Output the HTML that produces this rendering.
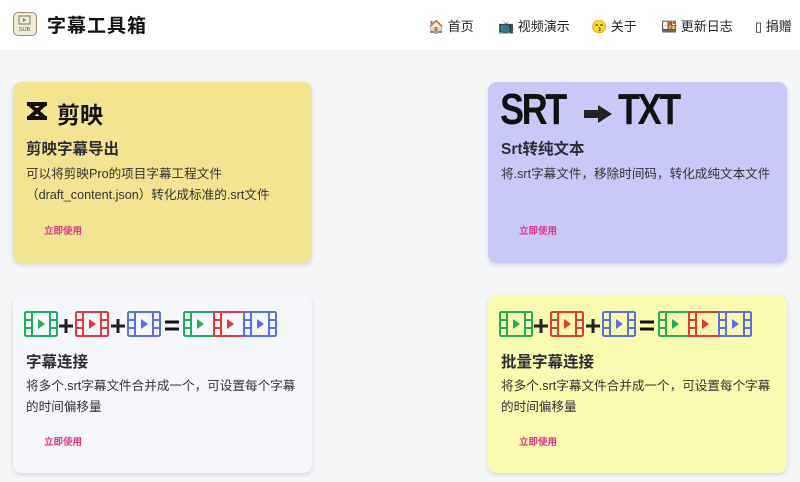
<!DOCTYPE html>
<html><head><meta charset="utf-8"><style>
*{margin:0;padding:0;box-sizing:border-box}
body{width:800px;height:482px;overflow:hidden;background:#f4f5f7;font-family:"Liberation Sans","Noto Sans CJK SC",sans-serif;position:relative}
.hdr{position:absolute;left:0;top:0;width:800px;height:50px;background:#fff}
.logo{position:absolute;left:13px;top:12px;width:24px;height:24px;border:1.5px solid #9a9070;border-radius:5px;background:#f1ecd6}
.title{position:absolute;left:47px;top:11px;font-size:19px;font-weight:bold;color:#111;letter-spacing:1px}
.nav{position:absolute;top:16px;font-size:13px;color:#222}
.card{position:absolute;width:299px;border-radius:9px;box-shadow:0 2px 5px rgba(0,0,0,.13)}
.h{position:absolute;left:13px;font-size:15.5px;font-weight:bold;color:#2d2d35}
.p{position:absolute;left:13px;font-size:12.6px;color:#333;line-height:21px;white-space:nowrap}
.b{position:absolute;left:31px;font-size:9.5px;font-weight:bold;color:#e0338a}
</style></head><body>
<div class="hdr">
<div class="logo"><svg width="21" height="21" viewBox="0 0 21 21" style="position:absolute;left:0;top:0"><rect x="5" y="3" width="11" height="8" fill="none" stroke="#777" stroke-width="1"/><path d="M9 5 L12 7 L9 9Z" fill="#777"/><text x="10.5" y="18" font-size="5.5" text-anchor="middle" fill="#555" font-family="Liberation Sans">SUB</text></svg></div>
<div class="title">字幕工具箱</div>
<div class="nav" style="left:428px">🏠 首页</div>
<div class="nav" style="left:498px">📺 视频演示</div>
<div class="nav" style="left:591px">😙 关于</div>
<div class="nav" style="left:661px">🍱 更新日志</div>
<div class="nav" style="left:755px">▯ 捐赠</div>
</div>

<div class="card" style="left:13px;top:82px;height:181px;background:#f2e491">
<svg style="position:absolute;left:12px;top:19px" width="24" height="20" viewBox="0 0 24 20"><path d="M2 3 L22 3 M2 17 L22 17 M4 3 L20 17 M20 3 L4 17" stroke="#111" stroke-width="4" fill="none"/></svg>
<div style="position:absolute;left:44px;top:14px;font-size:23px;font-weight:bold;color:#111">剪映</div>
<div class="h" style="top:55px">剪映字幕导出</div>
<div class="p" style="top:82px">可以将剪映Pro的项目字幕工程文件<br>（draft_content.json）转化成标准的.srt文件</div>
<div class="b" style="top:141px">立即使用</div>
</div>

<div class="card" style="left:488px;top:82px;height:181px;background:#c8c8f9">
<div style="position:absolute;left:12px;top:3px;font-size:44px;font-weight:bold;color:#111;letter-spacing:-3px;transform:scaleX(.82);transform-origin:left">SRT</div>
<svg style="position:absolute;left:96px;top:23px" width="28" height="18" viewBox="0 0 28 18"><rect x="0" y="5" width="16" height="8" fill="#222"/><path d="M14 0 L28 9 L14 18Z" fill="#222"/></svg>
<div style="position:absolute;left:130px;top:3px;font-size:44px;font-weight:bold;color:#111;letter-spacing:-3px;transform:scaleX(.82);transform-origin:left">TXT</div>
<div class="h" style="top:55px">Srt转纯文本</div>
<div class="p" style="top:82px">将.srt字幕文件，移除时间码，转化成纯文本文件</div>
<div class="b" style="top:141px">立即使用</div>
</div>

<div class="card" style="left:13px;top:295px;height:178px;background:#f5f7fc">
<svg style="position:absolute;left:11px;top:16px" width="265" height="27" viewBox="0 0 265 27">
<g transform="translate(1,1)" stroke="#1fae5a" fill="none" stroke-width="2"><rect width="32" height="24" rx="1.5"/><path d="M7 0V24M25 0V24M0 8H7M0 16H7M25 8H32M25 16H32"/><path d="M13 7L20 12L13 17Z" fill="#1fae5a" stroke="none"/></g>
<path d="M42 8V22M35 15H49" stroke="#222" stroke-width="3"/>
<g transform="translate(52,1)" stroke="#e23a3a" fill="none" stroke-width="2"><rect width="32" height="24" rx="1.5"/><path d="M7 0V24M25 0V24M0 8H7M0 16H7M25 8H32M25 16H32"/><path d="M13 7L20 12L13 17Z" fill="#e23a3a" stroke="none"/></g>
<path d="M94 8V22M87 15H101" stroke="#222" stroke-width="3"/>
<g transform="translate(104,1)" stroke="#5a6fe0" fill="none" stroke-width="2"><rect width="32" height="24" rx="1.5"/><path d="M7 0V24M25 0V24M0 8H7M0 16H7M25 8H32M25 16H32"/><path d="M13 7L20 12L13 17Z" fill="#5a6fe0" stroke="none"/></g>
<path d="M141 11H155M141 18H155" stroke="#111" stroke-width="3"/>
<g transform="translate(160,1)" stroke="#1fae5a" fill="none" stroke-width="2"><rect width="30" height="24" rx="1.5"/><path d="M7 0V24M0 8H7M0 16H7"/><path d="M13 7L20 12L13 17Z" fill="#1fae5a" stroke="none"/></g>
<g transform="translate(190,1)" stroke="#e23a3a" fill="none" stroke-width="2"><rect width="30" height="24"/><path d="M7 0V24M0 8H7M0 16H7"/><path d="M13 7L20 12L13 17Z" fill="#e23a3a" stroke="none"/></g>
<g transform="translate(220,1)" stroke="#5a6fe0" fill="none" stroke-width="2"><rect width="32" height="24" rx="1.5"/><path d="M7 0V24M25 0V24M0 8H7M0 16H7M25 8H32M25 16H32"/><path d="M13 7L20 12L13 17Z" fill="#5a6fe0" stroke="none"/></g>
</svg>
<div class="h" style="top:55px">字幕连接</div>
<div class="p" style="top:81px">将多个.srt字幕文件合并成一个，可设置每个字幕<br>的时间偏移量</div>
<div class="b" style="top:139px">立即使用</div>
</div>

<div class="card" style="left:488px;top:295px;height:178px;background:#fafab0">
<svg style="position:absolute;left:11px;top:16px" width="265" height="27" viewBox="0 0 265 27">
<g transform="translate(1,1)" stroke="#1fae5a" fill="none" stroke-width="2"><rect width="32" height="24" rx="1.5"/><path d="M7 0V24M25 0V24M0 8H7M0 16H7M25 8H32M25 16H32"/><path d="M13 7L20 12L13 17Z" fill="#1fae5a" stroke="none"/></g>
<path d="M42 8V22M35 15H49" stroke="#222" stroke-width="3"/>
<g transform="translate(52,1)" stroke="#e23a3a" fill="none" stroke-width="2"><rect width="32" height="24" rx="1.5"/><path d="M7 0V24M25 0V24M0 8H7M0 16H7M25 8H32M25 16H32"/><path d="M13 7L20 12L13 17Z" fill="#e23a3a" stroke="none"/></g>
<path d="M94 8V22M87 15H101" stroke="#222" stroke-width="3"/>
<g transform="translate(104,1)" stroke="#5a6fe0" fill="none" stroke-width="2"><rect width="32" height="24" rx="1.5"/><path d="M7 0V24M25 0V24M0 8H7M0 16H7M25 8H32M25 16H32"/><path d="M13 7L20 12L13 17Z" fill="#5a6fe0" stroke="none"/></g>
<path d="M141 11H155M141 18H155" stroke="#111" stroke-width="3"/>
<g transform="translate(160,1)" stroke="#1fae5a" fill="none" stroke-width="2"><rect width="30" height="24" rx="1.5"/><path d="M7 0V24M0 8H7M0 16H7"/><path d="M13 7L20 12L13 17Z" fill="#1fae5a" stroke="none"/></g>
<g transform="translate(190,1)" stroke="#e23a3a" fill="none" stroke-width="2"><rect width="30" height="24"/><path d="M7 0V24M0 8H7M0 16H7"/><path d="M13 7L20 12L13 17Z" fill="#e23a3a" stroke="none"/></g>
<g transform="translate(220,1)" stroke="#5a6fe0" fill="none" stroke-width="2"><rect width="32" height="24" rx="1.5"/><path d="M7 0V24M25 0V24M0 8H7M0 16H7M25 8H32M25 16H32"/><path d="M13 7L20 12L13 17Z" fill="#5a6fe0" stroke="none"/></g>
</svg>
<div class="h" style="top:55px">批量字幕连接</div>
<div class="p" style="top:81px">将多个.srt字幕文件合并成一个，可设置每个字幕<br>的时间偏移量</div>
<div class="b" style="top:139px">立即使用</div>
</div>
</body></html>
